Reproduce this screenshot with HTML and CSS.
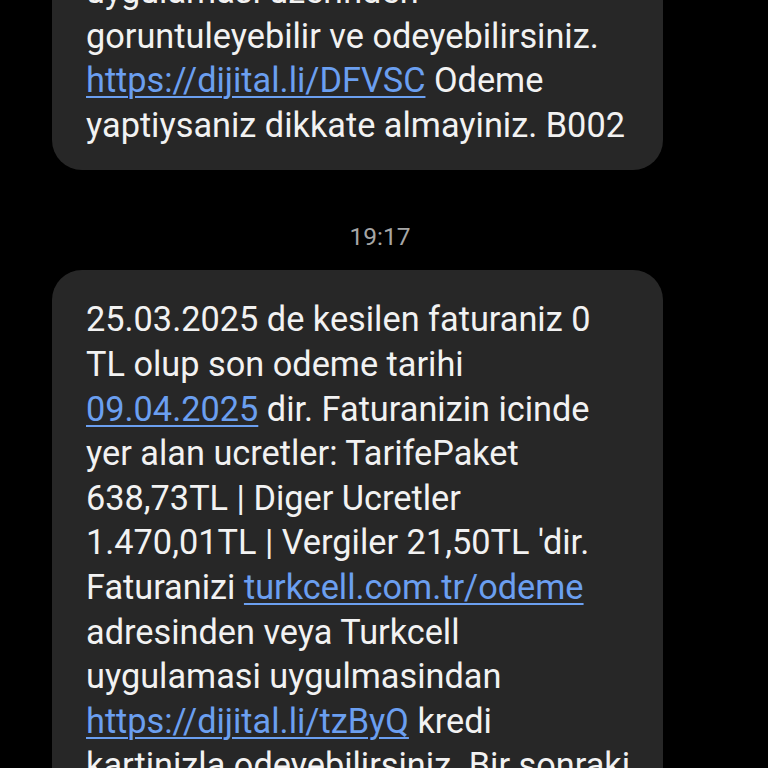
FILE: index.html
```html
<!DOCTYPE html>
<html lang="tr">
<head>
<meta charset="utf-8">
<link rel="stylesheet" href="styles.css">
</head>
<body>
<div class="thread">
  <div class="bubble first">
    uygulamasi uzerinden<br>
    goruntuleyebilir ve odeyebilirsiniz.<br>
    <a class="link" href="#">https://dijital.li/DFVSC</a> Odeme<br>
    yaptiysaniz dikkate almayiniz. B002
  </div>
  <div class="time">19:17</div>
  <div class="bubble">
    25.03.2025 de kesilen faturaniz 0<br>
    TL olup son odeme tarihi<br>
    <a class="link" href="#">09.04.2025</a> dir. Faturanizin icinde<br>
    yer alan ucretler: TarifePaket<br>
    638,73TL | Diger Ucretler<br>
    1.470,01TL | Vergiler 21,50TL 'dir.<br>
    Faturanizi <a class="link" href="#">turkcell.com.tr/odeme</a><br>
    adresinden veya Turkcell<br>
    uygulamasi uygulmasindan<br>
    <a class="link" href="#">https://dijital.li/tzByQ</a> kredi<br>
    kartinizla odeyebilirsiniz. Bir sonraki<br>
    faturaniz bilgisi icin Turkcell
  </div>
</div>
</body>
</html>
```
FILE: styles.css
```css
html, body {
  margin: 0;
  padding: 0;
  background: #000;
  height: 768px;
  overflow: hidden;
}

.thread {
  display: flex;
  flex-direction: column;
  align-items: flex-start;
  padding-left: 52px;
  margin-top: -58px;
  font-family: Roboto, "Noto Sans", sans-serif;
}

.bubble {
  box-sizing: border-box;
  width: 611px;
  background: #272727;
  border-radius: 30px;
  padding: 27px 20px 23px 34px;
  color: #f2f2f2;
  font-size: 34.3px;
  line-height: 44.6px;
  white-space: nowrap;
}

.link {
  color: #6b9ff0;
  text-decoration: underline;
  text-decoration-thickness: 2px;
  text-underline-offset: 4px;
}

.time {
  width: 656px;
  text-align: center;
  color: #a6a6a6;
  font-size: 24.5px;
  line-height: 30px;
  padding: 52px 0 18px;
}
```
